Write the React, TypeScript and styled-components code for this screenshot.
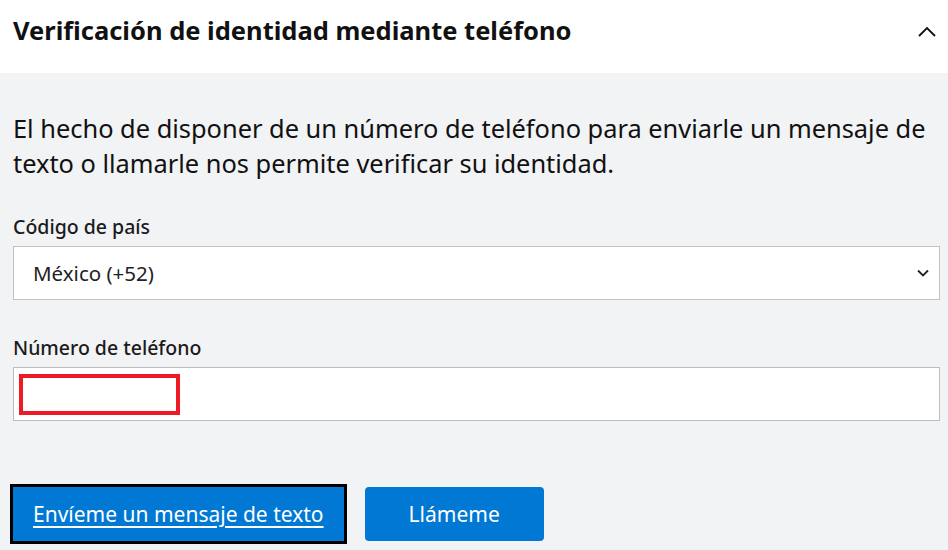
import React from "react";
import styled, { createGlobalStyle } from "styled-components";

const GlobalStyle = createGlobalStyle`
  html, body {
    margin: 0;
    padding: 0;
    background: #f2f3f5;
    font-family: "Noto Sans", "Open Sans", sans-serif;
    color: #1b1b1b;
  }
`;

const Page = styled.div`
  width: 948px;
  height: 550px;
  overflow: hidden;
  background: #f2f3f5;
`;

const Header = styled.div`
  height: 73px;
  background: #fff;
  display: flex;
  align-items: center;
  justify-content: space-between;
  padding: 0 10px 0 13px;
  box-sizing: border-box;
`;

const Title = styled.h2`
  margin: 0 0 14px;
  font-size: 25.5px;
  font-weight: 700;
  color: #111;
`;

const Chevron = styled.svg`
  width: 22px;
  height: 22px;
  margin-bottom: 10px;
`;

const Body = styled.div`
  padding: 38px 8px 0 13px;
  display: flex;
  flex-direction: column;
`;

const Intro = styled.p`
  margin: 0 0 33px;
  font-size: 25.4px;
  line-height: 35px;
  color: #111;
`;

const Label = styled.label`
  font-size: 19.5px;
  line-height: 26px;
  font-weight: 500;
  color: #1b1b1b;
  margin-bottom: 6px;
`;

const SelectBox = styled.div`
  height: 54px;
  background: #fff;
  border: 1px solid #c2c2c2;
  box-sizing: border-box;
  display: flex;
  align-items: center;
  justify-content: space-between;
  padding: 0 10px 0 19px;
  font-size: 20.5px;
  color: #222;
  margin-bottom: 35px;
`;

const InputBox = styled.div`
  height: 54px;
  background: #fff;
  border: 1px solid #bdbdbd;
  box-sizing: border-box;
  display: flex;
  align-items: center;
  padding: 0 5px;
  margin-bottom: 63px;
`;

const Redact = styled.div`
  width: 161px;
  height: 41px;
  border: 4px solid #ed1c24;
  box-sizing: border-box;
  background: #fff;
`;

const Actions = styled.div`
  display: flex;
  align-items: center;
  gap: 18px;
  margin-left: -3px;
`;

const Button = styled.button<{ $focused?: boolean }>`
  height: ${(p) => (p.$focused ? "60px" : "54px")};
  padding: 0 ${(p) => (p.$focused ? "20px" : "44px")};
  background: #0078d4;
  color: #fff;
  font-family: "Noto Sans", "Open Sans", sans-serif;
  font-size: 21px;
  border: ${(p) => (p.$focused ? "3px solid #000" : "none")};
  border-radius: ${(p) => (p.$focused ? "0" : "4px")};
  text-decoration: ${(p) => (p.$focused ? "underline" : "none")};
  text-underline-offset: 4px;
  text-decoration-thickness: 1.5px;
  cursor: pointer;
  box-sizing: border-box;
  white-space: nowrap;
`;

export default function App() {
  return (
    <Page>
      <GlobalStyle />
      <Header>
        <Title>Verificación de identidad mediante teléfono</Title>
        <Chevron viewBox="0 0 22 22" fill="none" stroke="#111" strokeWidth="1.8">
          <path d="M3 15 L11 7 L19 15" />
        </Chevron>
      </Header>
      <Body>
        <Intro>
          El hecho de disponer de un número de teléfono para enviarle un mensaje de
          texto o llamarle nos permite verificar su identidad.
        </Intro>
        <Label>Código de país</Label>
        <SelectBox>
          <span>México (+52)</span>
          <svg width="12" height="8" viewBox="0 0 12 8" fill="none" stroke="#222" strokeWidth="1.8">
            <path d="M1 1.5 L6 6.5 L11 1.5" />
          </svg>
        </SelectBox>
        <Label>Número de teléfono</Label>
        <InputBox>
          <Redact />
        </InputBox>
        <Actions>
          <Button $focused>Envíeme un mensaje de texto</Button>
          <Button>Llámeme</Button>
        </Actions>
      </Body>
    </Page>
  );
}
